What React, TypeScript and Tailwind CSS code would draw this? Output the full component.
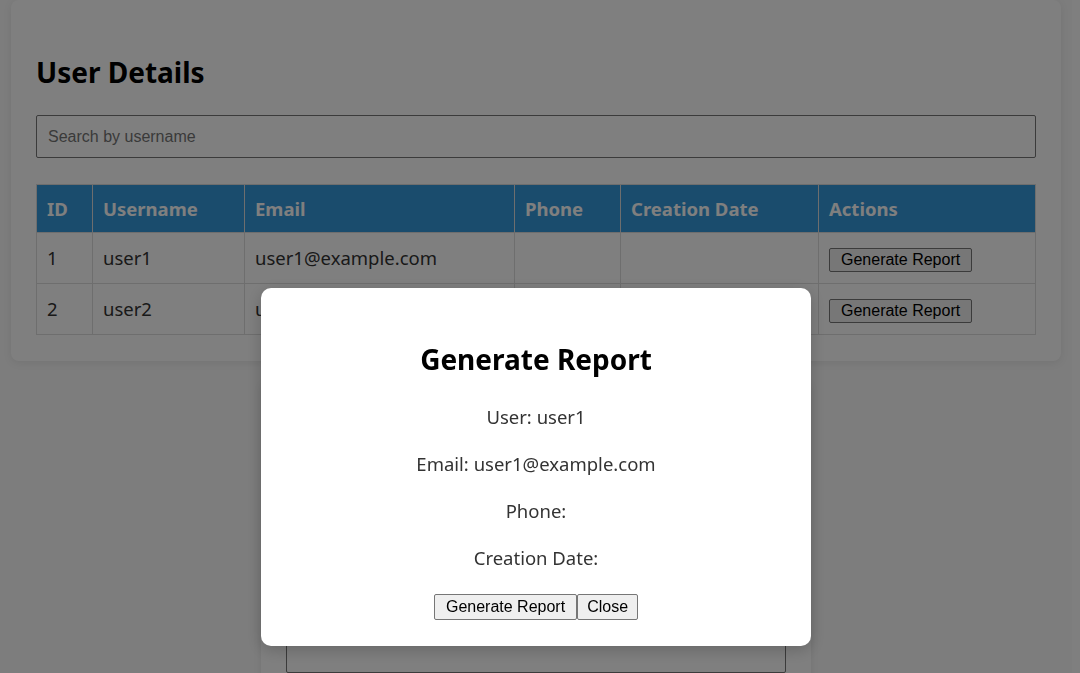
const users = [
  { id: 1, username: "user1", email: "user1@example.com", phone: "", created: "" },
  { id: 2, username: "user2", email: "user2@example.com", phone: "", created: "" },
]

const btn =
  "font-['Liberation_Sans',Arial,sans-serif] text-[16px] leading-[18px] text-black bg-[#efefef] border border-[#767676] rounded-[2px] py-[2px]"

export default function App() {
  const selected = users[0]

  return (
    <div className="relative min-h-[673px] w-[1072px] bg-[#fafafa] font-['Noto_Sans','Open_Sans',sans-serif] text-[#333]">
      {/* User list */}
      <div className="px-[11px]">
        <section className="bg-white rounded-[8px] shadow-[0_2px_8px_rgba(0,0,0,0.08)] px-[25px] pt-[53px] pb-[26px]">
          <h2 className="text-[28px] leading-[38px] font-bold text-black">User Details</h2>
          <input
            placeholder="Search by username"
            className="mt-[24px] block w-full h-[43px] border border-[#767676] rounded-[2px] px-[11px] text-[16px] font-['Liberation_Sans',Arial,sans-serif] placeholder:text-[#757575]"
          />
          <table className="mt-[26px] w-full table-fixed border-collapse text-[18.5px]">
            <thead>
              <tr className="bg-[#3498db] text-white h-[48px]">
                <th className="w-[56px] border border-[#ddd] px-[10px] text-left font-bold">ID</th>
                <th className="w-[152px] border border-[#ddd] px-[10px] text-left font-bold">Username</th>
                <th className="w-[270px] border border-[#ddd] px-[10px] text-left font-bold">Email</th>
                <th className="w-[106px] border border-[#ddd] px-[10px] text-left font-bold">Phone</th>
                <th className="w-[198px] border border-[#ddd] px-[10px] text-left font-bold">Creation Date</th>
                <th className="border border-[#ddd] px-[10px] text-left font-bold">Actions</th>
              </tr>
            </thead>
            <tbody>
              {users.map((u) => (
                <tr key={u.id} className="h-[51px]">
                  <td className="border border-[#ddd] px-[10px]">{u.id}</td>
                  <td className="border border-[#ddd] px-[10px]">{u.username}</td>
                  <td className="border border-[#ddd] px-[10px]">{u.email}</td>
                  <td className="border border-[#ddd] px-[10px]">{u.phone}</td>
                  <td className="border border-[#ddd] px-[10px]">{u.created}</td>
                  <td className="border border-[#ddd] px-[10px]">
                    <button className={btn + " px-[11px]"}>Generate Report</button>
                  </td>
                </tr>
              ))}
            </tbody>
          </table>
        </section>
      </div>

      {/* Add user form (mostly behind the dialog) */}
      <section className="mt-[20px] mx-auto w-[550px] bg-white rounded-[8px] shadow-[0_2px_8px_rgba(0,0,0,0.08)] px-[25px] pt-[25px] pb-[25px]">
        <h2 className="text-[28px] leading-[38px] font-bold text-black mb-[18px]">Add User</h2>
        <div className="flex flex-col gap-[13px]">
          <input className="block w-full h-[43px] border border-[#767676] rounded-[2px] px-[11px]" />
          <input className="block w-full h-[43px] border border-[#767676] rounded-[2px] px-[11px]" />
          <input className="block w-full h-[43px] border border-[#767676] rounded-[2px] px-[11px]" />
          <input className="block w-full h-[43px] border border-[#767676] rounded-[2px] px-[11px]" />
        </div>
      </section>

      {/* Report dialog */}
      <div className="fixed inset-0 bg-black/50">
        <div className="w-[1072px] flex justify-center pt-[288px]">
          <div className="w-[550px] bg-white rounded-[10px] shadow-[0_4px_16px_rgba(0,0,0,0.2)] pt-[52px] pb-[26px] flex flex-col items-center text-[18.5px]">
            <h2 className="text-[28px] leading-[38px] font-bold text-black">Generate Report</h2>
            <div className="mt-[26px] flex flex-col items-center gap-[21px] leading-[26px]">
              <p>User: {selected.username}</p>
              <p>Email: {selected.email}</p>
              <p>Phone: {selected.phone}</p>
              <p>Creation Date: {selected.created}</p>
            </div>
            <div className="mt-[23px] flex">
              <button className={btn + " px-[11px] py-[3px]"}>Generate Report</button>
              <button className={btn + " px-[9px] py-[3px]"}>Close</button>
            </div>
          </div>
        </div>
      </div>
    </div>
  )
}
